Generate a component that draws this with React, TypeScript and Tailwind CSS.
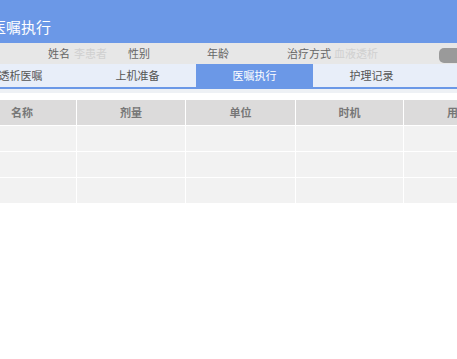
import React from "react";

const font = { fontFamily: '"Noto Sans CJK SC", "Noto Sans", sans-serif' };

export default function App() {
  const tabs = ["透析医嘱", "上机准备", "医嘱执行", "护理记录"];
  const cols = [
    { name: "名称", w: 108 },
    { name: "剂量", w: 108 },
    { name: "单位", w: 109 },
    { name: "时机", w: 107 },
    { name: "用法", w: 108 },
  ];
  const rows = [0, 1, 2];
  return (
    <div className="w-[457px] h-[359px] overflow-hidden bg-white" style={font}>
      {/* Header */}
      <div className="h-[43px] bg-[#6b98e7] flex items-center">
        <div className="ml-[-9px] mt-[10px] text-[15px] leading-none text-white whitespace-nowrap">医嘱执行</div>
      </div>
      {/* Info row */}
      <div className="h-[21px] bg-[#e7e7e7] flex items-center text-[11px] leading-none text-[#666] whitespace-nowrap">
        <span className="shrink-0 ml-[48px] w-[26px]">姓名</span>
        <span className="shrink-0 w-[54px] text-[#d0d0d0]">李患者</span>
        <span className="shrink-0 w-[79px]">性别</span>
        <span className="shrink-0 w-[80px]">年龄</span>
        <span className="shrink-0 w-[47px]">治疗方式</span>
        <span className="shrink-0 w-[105px] text-[#d0d0d0]">血液透析</span>
        <span className="shrink-0 self-start mt-[5px] w-[30px] h-[15px] rounded-[5px] bg-[#9a9a9a]" />
      </div>
      {/* Tabs */}
      <div className="h-[23px] bg-[#e8eef9] flex ml-[-38px] text-[11px] leading-none text-[#555] border-b-2 border-[#6b98e7] box-content">
        {tabs.map((t, i) => (
          <div
            key={t}
            className={
              "w-[117px] shrink-0 flex items-center justify-center " +
              (i === 2 ? "bg-[#6b98e7] text-white" : "")
            }
          >
            {t}
          </div>
        ))}
      </div>
      <div className="h-[4px] bg-[#eef1f5]" />
      <div className="h-[7px]" />
      {/* Table */}
      <div className="ml-[-32px] flex flex-col gap-[1px]">
        <div className="flex gap-[1px] h-[25px]">
          {cols.map((c) => (
            <div
              key={c.name}
              className="shrink-0 bg-[#dcdbdb] flex items-center justify-center text-[11px] font-bold text-[#777] whitespace-nowrap"
              style={{ width: c.w }}
            >
              {c.name}
            </div>
          ))}
        </div>
        {rows.map((r) => (
          <div key={r} className="flex gap-[1px] h-[25px]">
            {cols.map((c) => (
              <div key={c.name} className="shrink-0 bg-[#f2f2f2]" style={{ width: c.w }} />
            ))}
          </div>
        ))}
      </div>
    </div>
  );
}
